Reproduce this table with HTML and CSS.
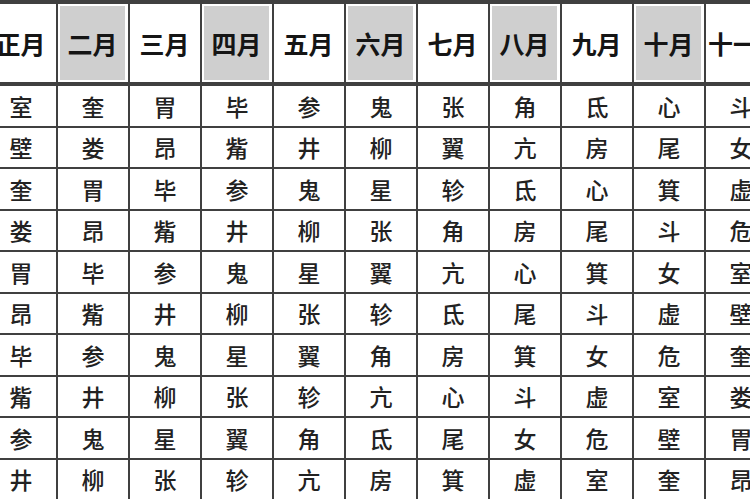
FILE: index.html
```html
<!DOCTYPE html>
<html lang="zh-CN">
<head>
<meta charset="utf-8">
<title>二十八宿月份表</title>
<link rel="stylesheet" href="styles.css">
</head>
<body>
<div class="sheet">
  <div class="head"><span class="label">正月</span></div>
  <div class="head"><span class="label shade">二月</span></div>
  <div class="head"><span class="label">三月</span></div>
  <div class="head"><span class="label shade">四月</span></div>
  <div class="head"><span class="label">五月</span></div>
  <div class="head"><span class="label shade">六月</span></div>
  <div class="head"><span class="label">七月</span></div>
  <div class="head"><span class="label shade">八月</span></div>
  <div class="head"><span class="label">九月</span></div>
  <div class="head"><span class="label shade">十月</span></div>
  <div class="head"><span class="label">十一月</span></div>

  <div class="cell">室</div><div class="cell">奎</div><div class="cell">胃</div><div class="cell">毕</div><div class="cell">参</div><div class="cell">鬼</div><div class="cell">张</div><div class="cell">角</div><div class="cell">氐</div><div class="cell">心</div><div class="cell">斗</div>
  <div class="cell">壁</div><div class="cell">娄</div><div class="cell">昂</div><div class="cell">觜</div><div class="cell">井</div><div class="cell">柳</div><div class="cell">翼</div><div class="cell">亢</div><div class="cell">房</div><div class="cell">尾</div><div class="cell">女</div>
  <div class="cell">奎</div><div class="cell">胃</div><div class="cell">毕</div><div class="cell">参</div><div class="cell">鬼</div><div class="cell">星</div><div class="cell">轸</div><div class="cell">氐</div><div class="cell">心</div><div class="cell">箕</div><div class="cell">虚</div>
  <div class="cell">娄</div><div class="cell">昂</div><div class="cell">觜</div><div class="cell">井</div><div class="cell">柳</div><div class="cell">张</div><div class="cell">角</div><div class="cell">房</div><div class="cell">尾</div><div class="cell">斗</div><div class="cell">危</div>
  <div class="cell">胃</div><div class="cell">毕</div><div class="cell">参</div><div class="cell">鬼</div><div class="cell">星</div><div class="cell">翼</div><div class="cell">亢</div><div class="cell">心</div><div class="cell">箕</div><div class="cell">女</div><div class="cell">室</div>
  <div class="cell">昂</div><div class="cell">觜</div><div class="cell">井</div><div class="cell">柳</div><div class="cell">张</div><div class="cell">轸</div><div class="cell">氐</div><div class="cell">尾</div><div class="cell">斗</div><div class="cell">虚</div><div class="cell">壁</div>
  <div class="cell">毕</div><div class="cell">参</div><div class="cell">鬼</div><div class="cell">星</div><div class="cell">翼</div><div class="cell">角</div><div class="cell">房</div><div class="cell">箕</div><div class="cell">女</div><div class="cell">危</div><div class="cell">奎</div>
  <div class="cell">觜</div><div class="cell">井</div><div class="cell">柳</div><div class="cell">张</div><div class="cell">轸</div><div class="cell">亢</div><div class="cell">心</div><div class="cell">斗</div><div class="cell">虚</div><div class="cell">室</div><div class="cell">娄</div>
  <div class="cell">参</div><div class="cell">鬼</div><div class="cell">星</div><div class="cell">翼</div><div class="cell">角</div><div class="cell">氐</div><div class="cell">尾</div><div class="cell">女</div><div class="cell">危</div><div class="cell">壁</div><div class="cell">胃</div>
  <div class="cell">井</div><div class="cell">柳</div><div class="cell">张</div><div class="cell">轸</div><div class="cell">亢</div><div class="cell">房</div><div class="cell">箕</div><div class="cell">虚</div><div class="cell">室</div><div class="cell">奎</div><div class="cell">昂</div>
</div>
</body>
</html>
```
FILE: styles.css
```css
html, body {
  margin: 0;
  padding: 0;
  background: #ffffff;
  overflow: hidden;
}

body {
  width: 750px;
  height: 500px;
  font-family: "Noto Sans CJK SC", "Noto Sans", sans-serif;
}

.sheet {
  display: grid;
  grid-template-columns: repeat(11, 70px);
  grid-template-rows: 80px repeat(10, 39.5px);
  gap: 2px;
  width: max-content;
  margin-left: -14px;
  padding-top: 4px;
  background: #404040;
}

.head {
  background: #ffffff;
  border-bottom: 2px solid #404040;
  padding: 2px 3px 2px 2px;
  display: flex;
}

.label {
  flex: 1;
  display: flex;
  align-items: center;
  justify-content: center;
  font-size: 25px;
  font-weight: 700;
  color: #151515;
  white-space: nowrap;
}

.shade {
  background: #cfcfcf;
}

.cell {
  background: #ffffff;
  display: flex;
  align-items: center;
  justify-content: center;
  font-size: 23px;
  font-weight: 500;
  color: #222222;
}
```
